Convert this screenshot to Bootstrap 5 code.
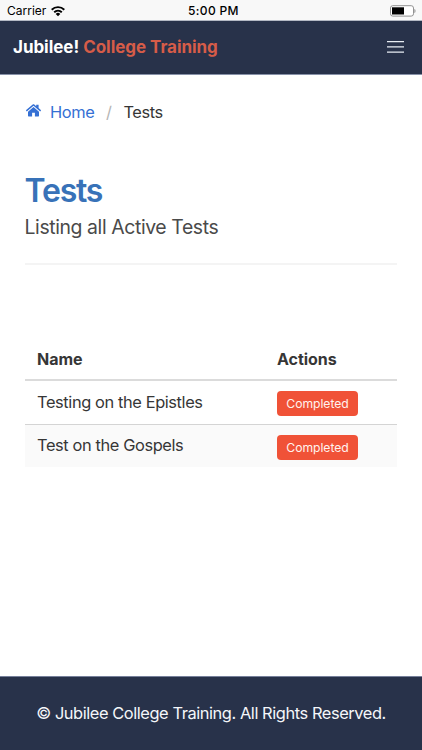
<!DOCTYPE html>
<html lang="en">
<head>
<meta charset="utf-8">
<meta name="viewport" content="width=device-width, initial-scale=1">
<title>Tests</title>
<link href="https://cdn.jsdelivr.net/npm/bootstrap@5.3.0/dist/css/bootstrap.min.css" rel="stylesheet">
<style>
body{font-family:Inter,"Liberation Sans",sans-serif;font-size:16.4px;letter-spacing:-.39px;line-height:24px;color:#363636;background:#fff}
.status{height:21px;background:#f8f8f8;border-bottom:1px solid #b4b9c4;color:#000;font-size:12px;letter-spacing:0;line-height:21px;padding:1px 6px 0 7px}
.status>*{flex:1}
.clock{font-weight:500;letter-spacing:.35px}
.topbar{height:54px;background:#28324a;border-bottom:1px solid #8791a8;padding:0 18px 1px 13px;letter-spacing:-.04px}
.brand{font-size:17px;font-weight:700}
.accent{color:#d65c48}
.page{padding:25px 25px 0}
.home{margin-left:8px}
.crumbs a{color:#3570d4}
.crumbs .sep{color:#b5b5b5;margin:0 12px 0 11.5px}
.title{font-size:32px;line-height:38px;letter-spacing:-1.2px;font-weight:600;color:#3872b8;margin:48px 0 0 -.5px}
.subtitle{font-size:19.4px;line-height:26px;color:#4a4a4a;margin:4px 0 0 -.5px}
.rule{height:2px;background:#f4f4f4;margin:23px 0 74px}
.tests{table-layout:fixed;--bs-table-color:#363636}
.tests th,.tests td{padding:0 12px;border:0;vertical-align:top}
.tests th{height:41px;padding-top:8px;font-weight:700;font-size:16px;letter-spacing:-.05px;border-bottom:2px solid #dbdbdb}
.tests td{height:43px;padding-top:8px}
.tests .ruled td{height:44px;padding-top:9px;border-bottom:1px solid #d4d4d4}
.tests .striped td{background:#fafafa}
.tests td.act{padding-top:10px}
.done,.done:hover{display:block;width:81px;height:25px;padding:0;border:0;border-radius:4px;background:#f05237;color:#fff3ef;font-size:12.2px;line-height:25px;letter-spacing:-.05px}
.foot{height:74px;background:#28324a;border-top:1px solid #76809a;color:#f5f7fa;letter-spacing:-.42px;padding-bottom:1px}
</style>
<script src="https://cdn.jsdelivr.net/npm/bootstrap@5.3.0/dist/js/bootstrap.bundle.min.js"></script>
</head>
<body class="d-flex flex-column vh-100 overflow-hidden">
<div class="status d-flex align-items-center">
  <div class="d-flex align-items-center"><span>Carrier</span>
    <svg class="ms-1" width="16" height="12" viewBox="0 0 16 12" fill="none" stroke="#000" stroke-width="1.9" aria-hidden="true"><path d="M1.7 4.7a9 9 0 0 1 12.6 0M4.2 7.3a5.5 5.5 0 0 1 7.6 0"/><path d="M5.7 8.9a3.4 3.4 0 0 1 4.6 0L8 11.2z" fill="#000" stroke="none"/></svg>
  </div>
  <div class="clock text-center ps-1">5:00 PM</div>
  <div class="d-flex justify-content-end">
    <svg width="27" height="12" viewBox="0 0 27 12" aria-hidden="true"><rect x="1.5" y=".7" width="23" height="10.4" rx="2.3" fill="#fff" stroke="#929292"/><path d="M3 2.3h12v7.2H3z"/><path d="M25.4 4c1.5.4 1.5 3.5 0 3.9z" fill="#929292"/></svg>
  </div>
</div>
<nav class="topbar d-flex align-items-center justify-content-between">
  <div class="brand"><span class="text-white">Jubilee!</span> <span class="accent">College Training</span></div>
  <svg width="17" height="13" viewBox="0 0 17 13" fill="#e8edf3" aria-label="Menu"><path d="M0 0h17v1.2H0zM0 5.3h17v1.2H0zM0 10.6h17v1.2H0z"/></svg>
</nav>
<main class="page flex-grow-1">
  <nav class="crumbs d-flex align-items-center" aria-label="breadcrumb">
    <a href="#" class="d-flex align-items-center text-decoration-none"><svg class="mb-1" width="17" height="15" viewBox="0 0 17 15" fill="#3570d4" aria-hidden="true"><path d="M8.5 4.1 3 8.7v4.1c0 .4.2.6.6.6h3.5V9.7h2.8v3.7h3.5c.4 0 .6-.2.6-.6V8.7z"/><path d="m.9 7.3 6.8-5.8c.5-.4 1.1-.4 1.6 0l1.9 1.7V1.7h2.4V5l2.5 2.3-.9 1.1-6.7-5.7-6.7 5.7z"/></svg><span class="home">Home</span></a>
    <span class="sep">/</span><span>Tests</span>
  </nav>
  <h1 class="title">Tests</h1>
  <p class="subtitle">Listing all Active Tests</p>
  <div class="rule"></div>
  <table class="tests table mb-0">
    <colgroup><col style="width:240px"><col></colgroup>
    <thead><tr><th>Name</th><th>Actions</th></tr></thead>
    <tbody>
      <tr class="ruled"><td>Testing on the Epistles</td><td class="act"><button class="done btn">Completed</button></td></tr>
      <tr class="striped"><td>Test on the Gospels</td><td class="act"><button class="done btn">Completed</button></td></tr>
    </tbody>
  </table>
</main>
<footer class="foot d-flex align-items-center justify-content-center"><span>© Jubilee College Training. All Rights Reserved.</span></footer>
</body>
</html>
